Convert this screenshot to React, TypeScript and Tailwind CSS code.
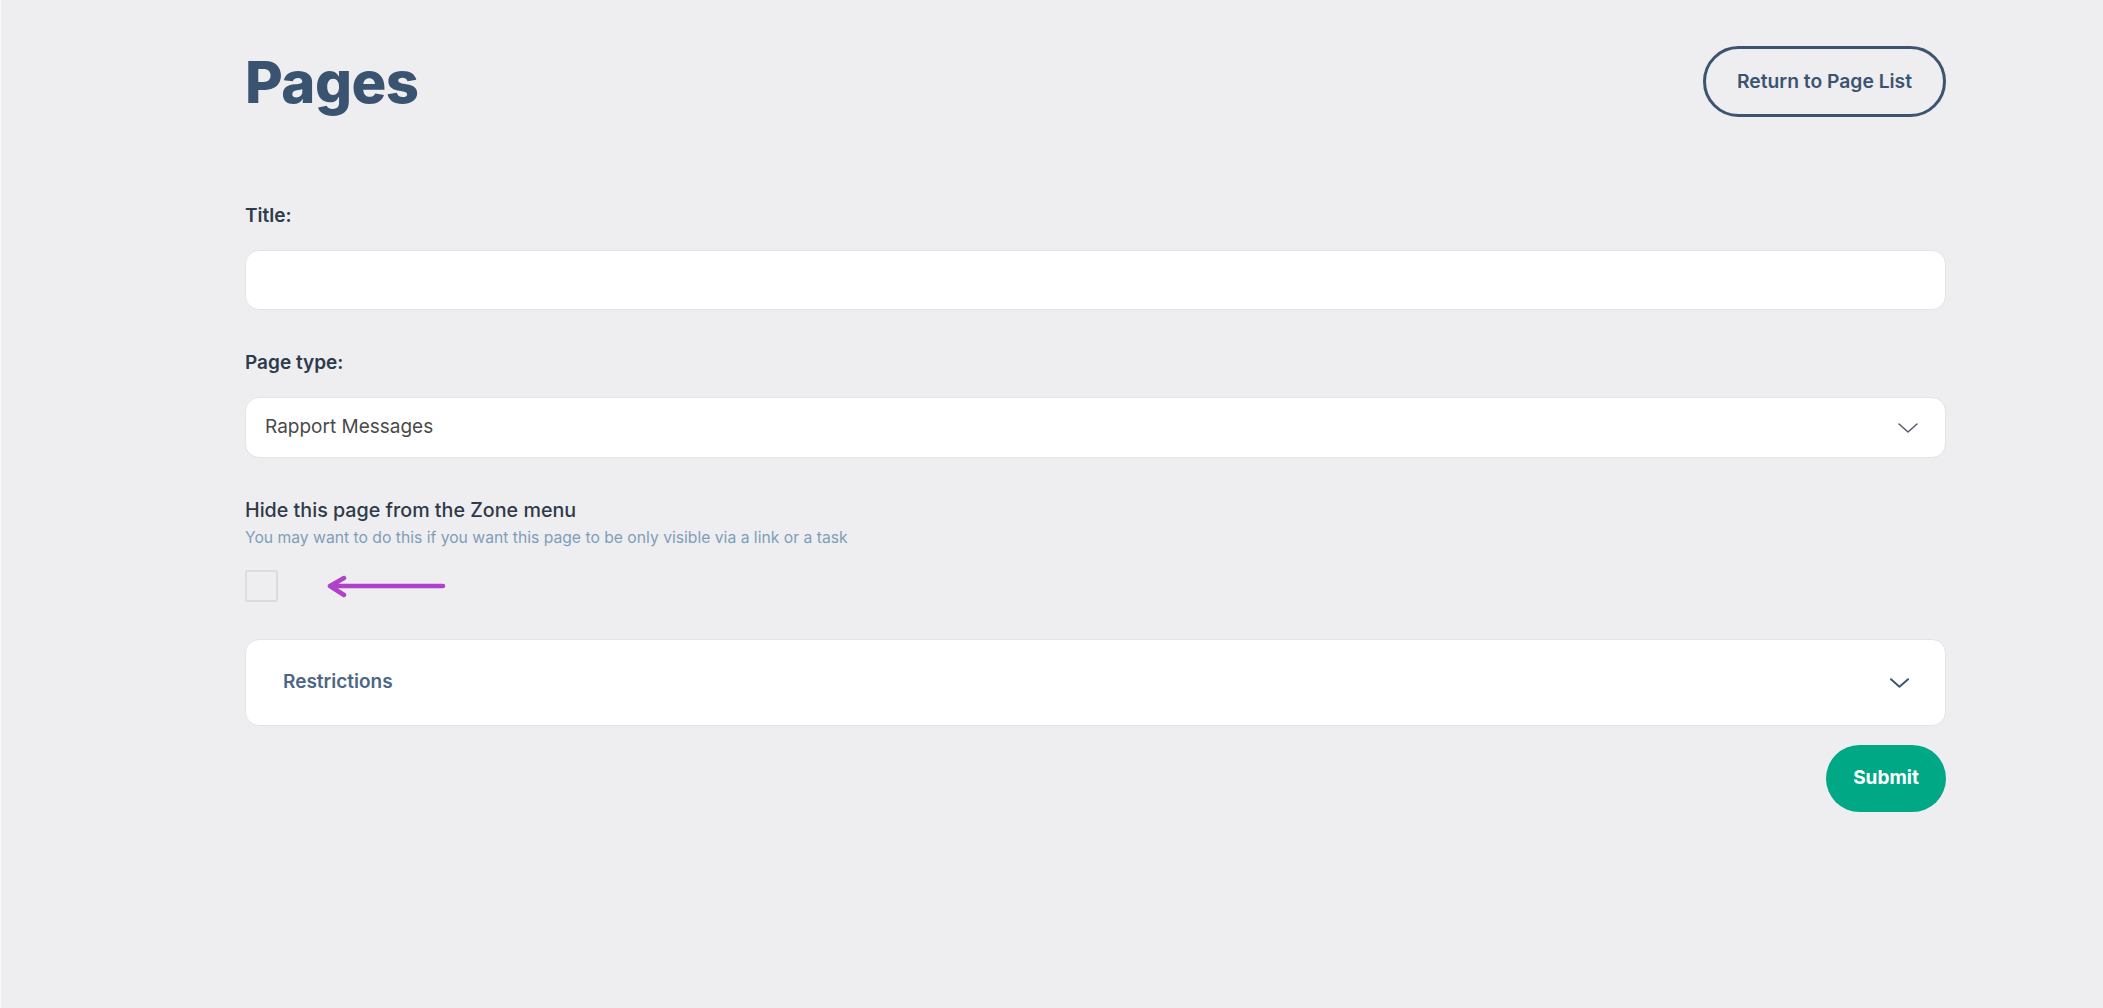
import { useState } from "react";

const PAGE_TYPES = ["Rapport Messages", "Content", "Links", "Tasks"];

function Chevron({ className }: { className: string }) {
  return (
    <svg viewBox="0 0 20 10" fill="none" className={className}>
      <path d="M1 1l9 8 9-8" stroke="currentColor" strokeLinecap="round" strokeLinejoin="round" />
    </svg>
  );
}

export default function App() {
  const [title, setTitle] = useState("");
  const [pageType, setPageType] = useState(PAGE_TYPES[0]);
  const [hidden, setHidden] = useState(false);
  const [open, setOpen] = useState(false);

  return (
    <div className="h-[1008px] w-full border-l border-[#f8f8f9] bg-[#eeeef1] font-['Inter',sans-serif]">
      <div className="ml-[244px] w-[1701px] pt-[46px]">
        <div className="flex h-[71px] items-center justify-between">
          <h1 className="text-[58px] font-extrabold leading-none tracking-[-0.5px] text-[#3a5370]">Pages</h1>
          <button className="flex h-[71px] w-[243px] items-center justify-center rounded-full border-[3px] border-[#3d5470] text-[19.3px] font-semibold text-[#3d5470]">
            Return to Page List
          </button>
        </div>

        <label className="mt-[87px] block text-[19px] font-semibold leading-[24px] text-[#2d3b4a]">Title:</label>
        <input
          value={title}
          onChange={e => setTitle(e.target.value)}
          className="mt-[22px] block h-[60px] w-full rounded-[14px] border border-[#e4e4e6] bg-white px-[19px] text-[19px] outline-none"
        />

        <label className="mt-[41px] block text-[19px] font-semibold leading-[24px] text-[#2d3b4a]">Page type:</label>
        <div className="relative mt-[22px] flex h-[61px] items-center rounded-[14px] border border-[#e4e4e6] bg-white pl-[19px] pr-[27px]">
          <select
            value={pageType}
            onChange={e => setPageType(e.target.value)}
            className="absolute inset-0 cursor-pointer opacity-0"
          >
            {PAGE_TYPES.map(t => <option key={t}>{t}</option>)}
          </select>
          <span className="flex-1 text-[19px] text-[#4a4a4a]">{pageType}</span>
          <Chevron className="h-[10px] w-[20px] stroke-[1.6] text-[#59606a]" />
        </div>

        <div className="mt-[40px] text-[19.7px] font-medium leading-[24px] text-[#2e3a48]">Hide this page from the Zone menu</div>
        <div className="mt-[6px] text-[15.7px] leading-[20px] text-[#7f9db9]">
          You may want to do this if you want this page to be only visible via a link or a task
        </div>
        <div className="mt-[22px] flex items-center gap-[49px]">
          <button
            onClick={() => setHidden(!hidden)}
            className={`h-[32px] w-[33px] rounded-[2px] border-2 ${hidden ? "border-[#00a886] bg-[#00a886]" : "border-[#dcdcdc] bg-transparent"}`}
          />
          <svg width="119" height="28" viewBox="0 0 119 28" fill="none">
            <path d="M3 14h113M3 14l14-8M3 14l14 9" stroke="#b042c9" strokeWidth="4.5" strokeLinecap="round" strokeLinejoin="round" />
          </svg>
        </div>

        <div className="mt-[37px] rounded-[14px] border border-[#e4e4e6] bg-white">
          <button onClick={() => setOpen(!open)} className="flex h-[85px] w-full items-center pl-[37px] pr-[36px]">
            <span className="flex-1 text-left text-[19px] font-semibold text-[#4c6786]">Restrictions</span>
            <Chevron className={`h-[10px] w-[19px] stroke-2 text-[#3d5470] ${open ? "rotate-180" : ""}`} />
          </button>
        </div>

        <div className="mt-[19px] flex justify-end">
          <button className="h-[67px] w-[120px] rounded-full bg-[#00a886] text-[19px] font-bold text-white">Submit</button>
        </div>
      </div>
    </div>
  );
}
